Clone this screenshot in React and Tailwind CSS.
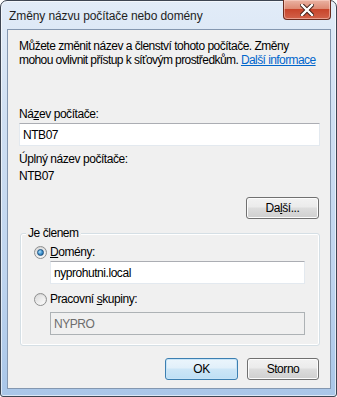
import React from 'react';

const Button = ({ children, primary = false, className = '' }) => (
  <button
    type="button"
    className={`relative h-[22px] rounded-[3px] border text-[12px] leading-none tracking-[-0.45px] text-black ${
      primary
        ? 'border-[#3c7fb1] bg-[linear-gradient(#ebf5fc_0%,#e1f0fa_45%,#cde6f7_50%,#bedff5_100%)] shadow-[inset_0_0_0_1px_#c7e4f7]'
        : 'border-[#707070] bg-[linear-gradient(#f2f2f2_0%,#ebebeb_45%,#dddddd_50%,#cfcfcf_100%)] shadow-[inset_0_0_0_1px_#fcfcfc]'
    } ${className}`}
  >
    {children}
  </button>
);

const TextBox = ({ value, disabled = false, className = '' }) => (
  <div
    className={`flex h-[23px] items-center border px-[3px] ${
      disabled
        ? 'border-[#adb2b5] bg-[#f0f0f0] text-[#6d6d6d]'
        : 'border-[#e3e9ef] border-t-[#abadb3] bg-white text-black'
    } ${className}`}
  >
    {value}
  </div>
);

const Radio = ({ checked }) => (
  <span className="flex h-[13px] w-[13px] items-center justify-center rounded-full border border-[#8e8f8f] bg-[linear-gradient(#d6d6d6,#f6f6f6)]">
    <span className="flex h-[9px] w-[9px] items-center justify-center rounded-full bg-[linear-gradient(135deg,#dcdcdc,#fbfbfb)]">
      {checked && (
        <span className="h-[7px] w-[7px] rounded-full border border-[#1c5180] bg-[radial-gradient(circle_at_35%_35%,#b5e4fb_0%,#4a9bd5_45%,#145a97_100%)]" />
      )}
    </span>
  </span>
);

export default function App() {
  return (
    <div className="h-[397px] w-[337px] bg-white font-['Liberation_Sans',Arial,sans-serif] text-[12px] tracking-[-0.45px] text-black">
      <div className="flex h-full flex-col rounded-t-[7px] rounded-b-[3px] border border-[#3d4552] bg-[linear-gradient(#e2ecf8_0%,#cfdff2_30%,#bed4ee_70%,#a9c6e8_100%)] pb-[7px] pl-[6px] pr-[5px] shadow-[inset_0_0_0_1px_rgba(255,255,255,0.6)]">
        {/* Title bar */}
        <div className="flex h-[28px] items-start justify-between">
          <span className="pl-[2px] pt-[8px] leading-[14px] tracking-[-0.1px] text-[#1e1e1e]">Změny názvu počítače nebo domény</span>
          <button
            type="button"
            className="-mt-[1px] flex h-[20px] w-[48px] items-center justify-center rounded-b-[4px] border border-t-0 border-[#6b2b1e] bg-[linear-gradient(#eab3a3_0%,#de8b74_45%,#c8452b_50%,#d2624a_100%)] shadow-[inset_0_0_0_1px_rgba(255,220,210,0.5)]"
          >
            <svg width="14" height="12" viewBox="0 0 14 12">
              <path d="M2 1 L12 11 M12 1 L2 11" stroke="#3b1b14" strokeWidth="4.2" strokeLinecap="square" />
              <path d="M2 1 L12 11 M12 1 L2 11" stroke="#ffffff" strokeWidth="2.4" strokeLinecap="square" />
            </svg>
          </button>
        </div>

        {/* Client area */}
        <div className="flex flex-1 flex-col border border-[#8497b0] bg-[#f0f0f0] pl-[11px] pr-[10px]">
          <p className="mt-[9px] whitespace-nowrap leading-[14px] tracking-[-0.5px]">
            Můžete změnit název a členství tohoto počítače. Změny
            <br />
            <span className="tracking-[-0.58px]">
              mohou ovlivnit přístup k síťovým prostředkům.{' '}
              <span className="text-[#0066cc] underline">Další informace</span>
            </span>
          </p>

          <span className="mt-[40px] leading-[14px]">
            Ná<span className="underline">z</span>ev počítače:
          </span>
          <TextBox value="NTB07" className="mt-[2px]" />

          <span className="mt-[6px] leading-[14px]">Úplný název počítače:</span>
          <span className="mt-[3px] leading-[14px]">NTB07</span>

          <div className="mt-[14px] flex justify-end pr-[1px]">
            <Button className="w-[73px]">
              Da<span className="underline">l</span>ší...
            </Button>
          </div>

          {/* Group box */}
          <div className="relative ml-[1px] mt-[14px] rounded-[3px] border border-[#d5dfe5] pb-[10px] pl-[13px] pr-[14px] pt-[11px] shadow-[inset_0_0_0_1px_#ffffff]">
            <span className="absolute -top-[8px] left-[5px] bg-[#f0f0f0] px-[2px] leading-[14px]">Je členem</span>
            <div className="flex h-[14px] items-center gap-[3px]">
              <Radio checked />
              <span className="leading-[14px]">
                <span className="underline">D</span>omény:
              </span>
            </div>
            <TextBox value="nyprohutni.local" className="ml-[16px] mt-[2px] h-[22px]" />
            <div className="mt-[8px] flex h-[14px] items-center gap-[3px]">
              <Radio />
              <span className="leading-[14px]">
                Pracovní <span className="underline">s</span>kupiny:
              </span>
            </div>
            <TextBox value="NYPRO" disabled className="ml-[16px] mt-[6px] h-[22px]" />
          </div>

          <div className="mt-[12px] flex justify-end gap-[9px] pr-[1px]">
            <Button primary className="w-[73px]">OK</Button>
            <Button className="w-[72px]">Storno</Button>
          </div>
        </div>
      </div>
    </div>
  );
}
